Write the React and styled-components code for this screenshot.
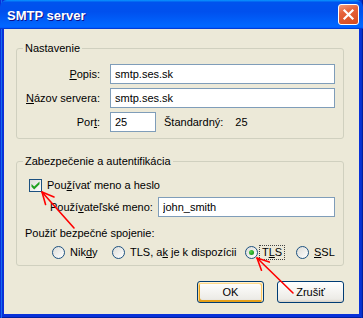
import React from 'react';
import styled, { createGlobalStyle } from 'styled-components';

const GlobalStyle = createGlobalStyle`
  html, body {
    margin: 0;
    padding: 0;
    background: #ece9d8;
  }
  body {
    font-family: "Liberation Sans", Arial, sans-serif;
    font-size: 11px;
    color: #000;
  }
`;

const Window = styled.div`
  position: relative;
  width: 363px;
  height: 318px;
  box-sizing: border-box;
  display: flex;
  flex-direction: column;
  background: #0831d9;
  padding: 0 4px 4px 4px;
  box-shadow: inset 1px 0 #0831d9, inset 2px 0 #166aee, inset -1px 0 #001ea0, inset -2px 0 #0734c8, inset 0 -1px #001ea0;
`;

const TitleBar = styled.div`
  height: 29px;
  margin: 0 -4px;
  padding: 0 4px 0 7px;
  display: flex;
  align-items: center;
  background: linear-gradient(180deg, #0997ff, #0053ee 8%, #0050ee 40%, #06f 88%, #06f 93%, #005bff 95%, #003dd7 96%, #003dd7);
  border-radius: 7px 7px 0 0;
`;

const Title = styled.div`
  font-family: "Liberation Sans", Arial, sans-serif;
  font-weight: bold;
  font-size: 13px;
  color: #fff;
  text-shadow: 1px 1px #0f1089;
  padding-top: 1px;
`;

const CloseButton = styled.div`
  margin-left: auto;
  width: 21px;
  height: 21px;
  box-sizing: border-box;
  border: 1px solid #fff;
  border-radius: 3px;
  background: linear-gradient(160deg, #f39b7c 0%, #e6633c 35%, #d64a1e 100%);
  display: flex;
  align-items: center;
  justify-content: center;
`;

const Body = styled.div`
  flex: 1;
  background: #ece9d8;
  padding: 13px 15px 0 12px;
  display: flex;
  flex-direction: column;
`;

const Group = styled.fieldset`
  margin: ${(p) => (p.$first ? '0' : '16px 0 0 0')};
  padding: 0;
  border: 1px solid #d0d0bf;
  border-radius: 3px;
  min-width: 0;
`;

const Legend = styled.legend`
  margin-left: 6px;
  padding: 0 2px;
  line-height: 13px;
  font-size: 11px;
`;

const ServerGrid = styled.div`
  display: grid;
  grid-template-columns: 83px 1fr;
  column-gap: 10px;
  row-gap: 4px;
  align-items: center;
  padding: 9px 8px 6px 0;
`;

const FieldLabel = styled.label`
  text-align: right;
  white-space: nowrap;
  line-height: 13px;
`;

const Key = styled.span`
  text-decoration: underline;
  text-underline-offset: 1px;
`;

const TextInput = styled.input`
  box-sizing: border-box;
  height: 20px;
  width: ${(p) => p.$width || '100%'};
  margin: 0;
  padding: 0 4px;
  border: 1px solid #7f9db9;
  background: #fff;
  font-family: "Liberation Sans", Arial, sans-serif;
  font-size: 11px;
  color: #000;
  outline: none;
`;

const PortRow = styled.div`
  display: flex;
  align-items: center;
`;

const Plain = styled.span`
  margin-left: ${(p) => p.$gap || 0}px;
  line-height: 13px;
  white-space: nowrap;
`;

const SecurityBox = styled.div`
  display: flex;
  flex-direction: column;
  padding: 11px 8px 6px 8px;
`;

const CheckRow = styled.div`
  display: flex;
  align-items: center;
  margin-left: 4px;
  height: 13px;
`;

const CheckBox = styled.div`
  width: 13px;
  height: 13px;
  box-sizing: border-box;
  border: 1px solid #1c5180;
  background: linear-gradient(135deg, #dcdcd7, #fff);
  display: flex;
  align-items: center;
  justify-content: center;
`;

const UserRow = styled.div`
  display: flex;
  align-items: center;
  margin-top: 5px;
  padding-left: 25px;
`;

const UserLabel = styled.label`
  width: 108px;
  flex-shrink: 0;
  line-height: 13px;
  white-space: nowrap;
`;

const SecureText = styled.div`
  margin-top: 10px;
  line-height: 13px;
`;

const RadioRow = styled.div`
  display: flex;
  align-items: center;
  margin-top: 6px;
  padding-left: 27px;
  height: 13px;
`;

const Option = styled.div`
  display: flex;
  align-items: center;
  width: ${(p) => (p.$width ? `${p.$width}px` : 'auto')};
  flex-shrink: 0;
`;

const Radio = styled.div`
  width: 13px;
  height: 13px;
  box-sizing: border-box;
  border-radius: 50%;
  border: 1px solid #1c5180;
  background: linear-gradient(135deg, #dcdcd7, #fff);
  display: flex;
  align-items: center;
  justify-content: center;
  margin-right: ${(p) => (p.$focused ? 1 : 5)}px;
`;

const Dot = styled.div`
  width: 5px;
  height: 5px;
  border-radius: 50%;
  background: radial-gradient(circle at 35% 35%, #55d34f, #21a121 60%, #1a8a1a);
`;

const OptionText = styled.span`
  line-height: 13px;
  white-space: nowrap;
  padding: ${(p) => (p.$focused ? '0 2px 0 2px' : '0')};
  border: ${(p) => (p.$focused ? '1px dotted #444' : 'none')};
`;

const ButtonRow = styled.div`
  display: flex;
  justify-content: flex-end;
  gap: 13px;
  margin-top: 15px;
`;

const Button = styled.button`
  width: 67px;
  height: 22px;
  box-sizing: border-box;
  margin: 0;
  padding: 0;
  border: 1px solid #003c74;
  border-radius: 3px;
  background: linear-gradient(180deg, #fff, #ecebe6 86%, #d6d0c5);
  font-family: "Liberation Sans", Arial, sans-serif;
  font-size: 11px;
  font-weight: normal;
  color: #000;
  box-shadow: ${(p) =>
    p.$default
      ? 'inset -1px 1px #fff0cf, inset 1px 2px #fdd889, inset -2px 2px #fbc761, inset 2px -2px #e5a01a'
      : 'none'};
`;

const Overlay = styled.svg`
  position: absolute;
  left: 0;
  top: 0;
  pointer-events: none;
`;

function headPoints(tip, tail, len, spread) {
  const a = Math.atan2(tail[1] - tip[1], tail[0] - tip[0]);
  const p1 = [tip[0] + len * Math.cos(a + spread), tip[1] + len * Math.sin(a + spread)];
  const p2 = [tip[0] + len * Math.cos(a - spread), tip[1] + len * Math.sin(a - spread)];
  return `M${p1[0]} ${p1[1]} L${tip[0]} ${tip[1]} L${p2[0]} ${p2[1]}`;
}

const Arrow = ({ tip, tail }) => (
  <g stroke="#ff0000" strokeWidth="1.6" fill="none" strokeLinecap="round" strokeLinejoin="round">
    <path d={`M${tail[0]} ${tail[1]} L${tip[0]} ${tip[1]}`} />
    <path d={headPoints(tip, tail, 13, 0.45)} />
  </g>
);

export default function App() {
  return (
    <>
      <GlobalStyle />
      <Window>
        <TitleBar>
          <Title>SMTP server</Title>
          <CloseButton>
            <svg width="13" height="13" viewBox="0 0 13 13">
              <path d="M2.5 2.5 L10.5 10.5 M10.5 2.5 L2.5 10.5" stroke="#fff" strokeWidth="2.2" strokeLinecap="square" />
            </svg>
          </CloseButton>
        </TitleBar>
        <Body>
          <Group $first>
            <Legend>Nastavenie</Legend>
            <ServerGrid>
              <FieldLabel><Key>P</Key>opis:</FieldLabel>
              <TextInput defaultValue="smtp.ses.sk" readOnly />
              <FieldLabel><Key>N</Key>ázov servera:</FieldLabel>
              <TextInput defaultValue="smtp.ses.sk" readOnly />
              <FieldLabel>Por<Key>t</Key>:</FieldLabel>
              <PortRow>
                <TextInput defaultValue="25" readOnly $width="46px" />
                <Plain $gap={8}>Štandardný:</Plain>
                <Plain $gap={12}>25</Plain>
              </PortRow>
            </ServerGrid>
          </Group>
          <Group>
            <Legend>Zabezpečenie a autentifikácia</Legend>
            <SecurityBox>
              <CheckRow>
                <CheckBox>
                  <svg width="9" height="9" viewBox="0 0 9 9">
                    <path d="M0.5 3 L3.2 5.6 L8.5 0.5 L8.5 3.3 L3.2 8.5 L0.5 5.8 Z" fill="#21a121" />
                  </svg>
                </CheckBox>
                <Plain $gap={5}>Pou<Key>ž</Key>ívať meno a heslo</Plain>
              </CheckRow>
              <UserRow>
                <UserLabel>Použí<Key>v</Key>ateľské meno:</UserLabel>
                <TextInput defaultValue="john_smith" readOnly />
              </UserRow>
              <SecureText>Použiť bezpečné spojenie:</SecureText>
              <RadioRow>
                <Option $width={60}>
                  <Radio />
                  <OptionText>Nik<Key>d</Key>y</OptionText>
                </Option>
                <Option $width={133}>
                  <Radio />
                  <OptionText>TLS, a<Key>k</Key> je k dispozícii</OptionText>
                </Option>
                <Option $width={51}>
                  <Radio $focused>
                    <Dot />
                  </Radio>
                  <OptionText $focused>T<Key>L</Key>S</OptionText>
                </Option>
                <Option>
                  <Radio />
                  <OptionText><Key>S</Key>SL</OptionText>
                </Option>
              </RadioRow>
            </SecurityBox>
          </Group>
          <ButtonRow>
            <Button $default>OK</Button>
            <Button>Zrušiť</Button>
          </ButtonRow>
        </Body>
        <Overlay width="363" height="318" viewBox="0 0 363 318">
          <Arrow tip={[42, 192]} tail={[74, 228]} />
          <Arrow tip={[257, 258]} tail={[293, 293]} />
        </Overlay>
      </Window>
    </>
  );
}
